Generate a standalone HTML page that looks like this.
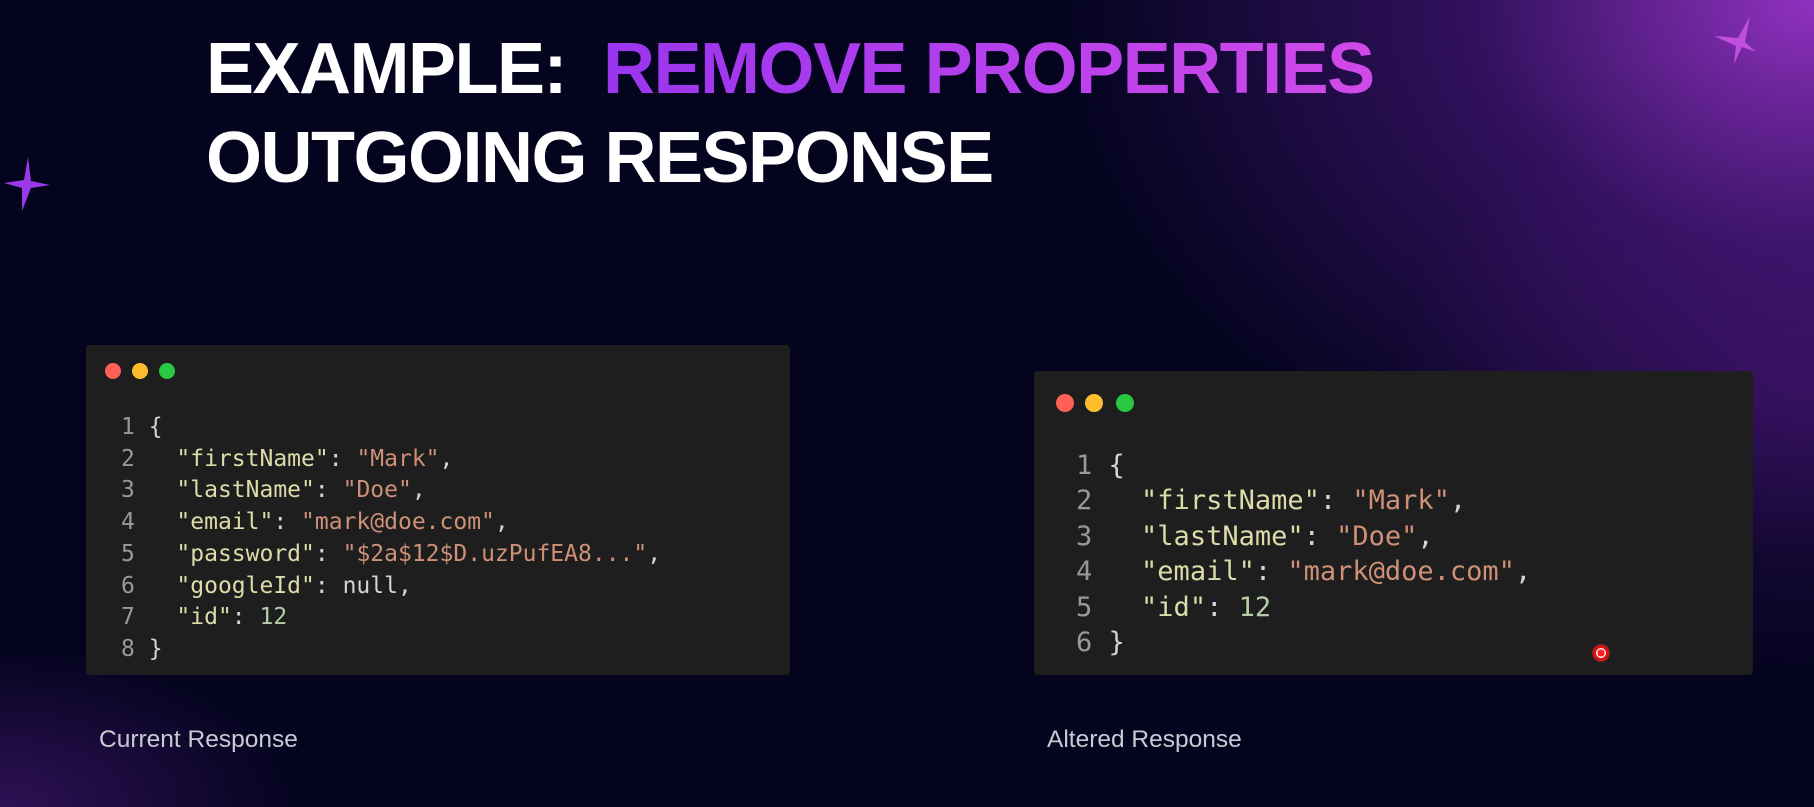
<!DOCTYPE html>
<html><head><meta charset="utf-8"><style>
html,body{margin:0;padding:0}
body{width:1814px;height:807px;overflow:hidden;position:relative;background:#04041f;font-family:"Liberation Sans",sans-serif}
.bg{position:absolute;inset:0;background:
radial-gradient(ellipse 760px 560px at 1814px 0px,rgba(160,55,210,.9),rgba(95,30,155,.5) 45%,rgba(4,4,31,0) 100%),
radial-gradient(ellipse 420px 300px at 1814px 380px,rgba(110,30,160,.35),rgba(4,4,31,0) 100%),
radial-gradient(ellipse 300px 160px at 0px 807px,rgba(90,30,140,.5),rgba(4,4,31,0) 100%);}
.t{position:absolute;left:206px;color:#fff;font-weight:bold;font-size:72px;letter-spacing:-1.5px;white-space:pre;line-height:1}
.p{background:linear-gradient(90deg,#9a35ef,#d04ae8);-webkit-background-clip:text;color:transparent}
.box{position:absolute;background:#1e1e1e;border-radius:4px}
.dot{position:absolute;border-radius:50%}
pre{position:absolute;margin:0;font-family:"DejaVu Sans Mono","Liberation Mono",monospace;color:#d4d4d4}
.k{color:#dcdcaa}.s{color:#ce9178}.n{color:#b5cea8}.ln{color:#999}
.lab{position:absolute;color:#c9c9d4;font-size:24.5px}
</style></head><body>
<div class="bg"></div>
<svg style="position:absolute;left:0;top:155px" width="55" height="60" viewBox="0 0 55 60"><path d="M28 2 L31 26 L50 30 L31 33 L22 56 L22 33 L4 28 L24 25 Z" fill="#9b38e8"/></svg>
<svg style="position:absolute;left:1710px;top:14px" width="50" height="55" viewBox="0 0 50 55"><path d="M40 2 L35 28 L46 38 L32 33 L24 50 L26 32 L4 22 L28 24 Z" fill="#c04fe0"/></svg>
<div class="t" style="top:33px">EXAMPLE:  <span class="p">REMOVE PROPERTIES</span></div>
<div class="t" style="top:122px">OUTGOING RESPONSE</div>

<div class="box" style="left:86px;top:345px;width:704px;height:330px"></div>
<div class="dot" style="left:105px;top:363px;width:16px;height:16px;background:#fe5f57"></div>
<div class="dot" style="left:132px;top:363px;width:16px;height:16px;background:#febc2e"></div>
<div class="dot" style="left:159px;top:363px;width:16px;height:16px;background:#28c840"></div>
<pre style="left:121px;top:412px;font-size:23px;line-height:31.7px"><span class="ln">1</span> {
<span class="ln">2</span>   <span class="k">"firstName"</span>: <span class="s">"Mark"</span>,
<span class="ln">3</span>   <span class="k">"lastName"</span>: <span class="s">"Doe"</span>,
<span class="ln">4</span>   <span class="k">"email"</span>: <span class="s">"mark@doe.com"</span>,
<span class="ln">5</span>   <span class="k">"password"</span>: <span class="s">"$2a$12$D.uzPufEA8..."</span>,
<span class="ln">6</span>   <span class="k">"googleId"</span>: null,
<span class="ln">7</span>   <span class="k">"id"</span>: <span class="n">12</span>
<span class="ln">8</span> }</pre>

<div class="box" style="left:1034px;top:371px;width:719px;height:304px"></div>
<div class="dot" style="left:1056px;top:394px;width:18px;height:18px;background:#fe5f57"></div>
<div class="dot" style="left:1085px;top:394px;width:18px;height:18px;background:#febc2e"></div>
<div class="dot" style="left:1116px;top:394px;width:18px;height:18px;background:#28c840"></div>
<pre style="left:1076px;top:448px;font-size:27px;line-height:35.4px"><span class="ln">1</span> {
<span class="ln">2</span>   <span class="k">"firstName"</span>: <span class="s">"Mark"</span>,
<span class="ln">3</span>   <span class="k">"lastName"</span>: <span class="s">"Doe"</span>,
<span class="ln">4</span>   <span class="k">"email"</span>: <span class="s">"mark@doe.com"</span>,
<span class="ln">5</span>   <span class="k">"id"</span>: <span class="n">12</span>
<span class="ln">6</span> }</pre>
<div class="dot" style="left:1592px;top:644px;width:18px;height:18px;background:radial-gradient(circle,#ff2020 0 28%,#fff 29% 38%,#e01010 39% 55%,rgba(255,80,80,.3) 70%,rgba(0,0,0,0) 100%)"></div>

<div class="lab" style="left:99px;top:726px">Current Response</div>
<div class="lab" style="left:1047px;top:726px">Altered Response</div>
</body></html>
